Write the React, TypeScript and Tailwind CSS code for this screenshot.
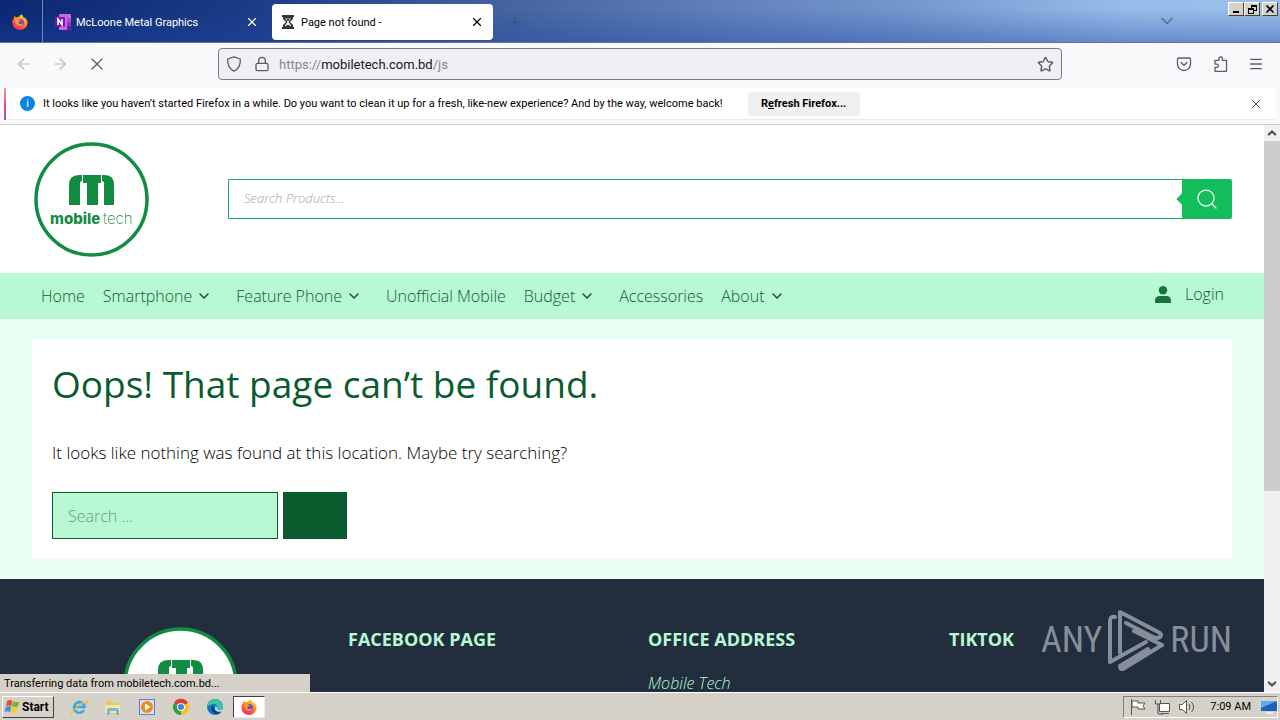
import { ChevronDown, ChevronUp, Search, X, ArrowLeft, ArrowRight, Star, Lock, Menu, Plus } from "lucide-react";

const navItems = [
    { label: "Home", menu: false },
    { label: "Smartphone", menu: true },
    { label: "Feature Phone", menu: true },
    { label: "Unofficial Mobile", menu: false },
    { label: "Budget", menu: true },
    { label: "Accessories", menu: false },
    { label: "About", menu: true }
];

function FirefoxIcon({ className }: { className?: string }) {
    return (
        <svg viewBox="0 0 16 16" className={className} aria-hidden="true">
            <defs>
                <linearGradient id="fx-body" x1="0.8" y1="0" x2="0.2" y2="1">
                    <stop offset="0" stopColor="#ffe226" />
                    <stop offset="0.45" stopColor="#ff8a16" />
                    <stop offset="1" stopColor="#f5156c" />
                </linearGradient>
            </defs>
            <path fill="url(#fx-body)" d="M9.4.3c1.2 1 1.8 2 2 3.1.9-.1 1.2.1 1.7.7 1 .9 2.5 2.7 2.5 5A7.6 7.6 0 0 1 8 16 7.6 7.6 0 0 1 .4 8.7c0-2.1.7-3.6 1.6-4.7L2.4 1.8l1.7 1.7C5 3 6 3 6.8 3.1 7.4 2 8.2 1 9.4.3Z" />
            <circle cx="8.2" cy="8.8" r="3.7" fill="#7542e5" />
            <path fill="#ff9a1f" d="M3.6 4.7c1.4-.5 2.8 0 3.6 1l2 .3c-.4 1-1.6 1.2-2.4 1.6-.6.5-.5 1.7.4 2.3 1.5.8 2.5-.6 4-.2-.7 1.7-2.2 2.6-3.9 2.3-2.7-.5-4.7-3.5-3.7-7.3Z" />
        </svg>
    );
}

function OneNoteIcon() {
    return (
        <svg viewBox="0 0 16 16" className="size-4" aria-hidden="true">
            <rect x="4" width="12" height="16" rx="1" fill="#ca64ea" />
            <path fill="#ae4bd5" d="M12 4h4v4h-4z" />
            <path fill="#9332bf" d="M12 8h4v4h-4z" />
            <path fill="#7719aa" d="M12 12h4v3l-1 1h-3z" />
            <rect y="3" width="10" height="10" rx="1" fill="#7719aa" />
            <path d="M3 11V5l4 6V5" fill="none" stroke="#fff" strokeWidth="1.5" />
        </svg>
    );
}

function HourglassIcon() {
    return (
        <svg viewBox="0 0 14 14" className="size-3.5" aria-hidden="true" fill="#333">
            <path d="M1 0h12v2H1zM1 12h12v2H1z" />
            <path fillRule="evenodd" d="M2 2h10v2L9 7l3 3v2H2v-2l3-3-3-3Zm2 1.5L6.5 7 4 10.5v1l3-2 3 2v-1L7.5 7 10 3.5Z" />
            <path d="M5 4h4L7 6.5z" />
        </svg>
    );
}

function MobileTechLogo({ className }: { className?: string }) {
    return (
        <svg viewBox="0 0 115 115" className={className} role="img" aria-label="mobile tech">
            <circle cx="57.5" cy="57.5" r="55.5" fill="#fff" stroke="#138c43" strokeWidth="3.5" />
            <g fill="#138c43">
                <path d="M35 63V43q0-10 10-10h3v6q-2 0-2 3v21Z" />
                <path d="M49 33h18v8h-3v22H53V41h-4Z" />
                <path d="M68 33h3q9 0 9 10v20H70V42q0-3-2-3Z" />
                <text x="16" y="82" className="font-[Inter,sans-serif] text-[15px] font-extrabold">mobile</text>
                <text x="69" y="82" className="font-[Inter,sans-serif] text-[15px] font-extralight">tech</text>
            </g>
        </svg>
    );
}

function TabBar() {
    return (
        <div className="h-[43px] shrink-0 flex items-stretch bg-[linear-gradient(to_bottom,transparent_20%,#1d46a366),linear-gradient(to_right,#0b2870,#1c3c85_20%,#45659f_40%,#6483bd_58%,#7396cb_70%,#98bcea_88%,#9bc0ea)] border-b border-slate-500 text-[11px]">
            <button aria-label="Firefox View" className="w-[43px] pt-px pr-0.5 flex items-center justify-center border-r border-[#7189b9]">
                <FirefoxIcon className="size-4" />
            </button>
            <div className="w-[229px] pt-0.5 flex items-center pl-3 pr-[13px] text-white">
                <OneNoteIcon />
                <span className="ml-[5px] mt-0.5 flex-1">McLoone Metal Graphics</span>
                <button aria-label="Close tab"><X className="size-3.5" strokeWidth={2} /></button>
            </div>
            <div className="w-[221px] mt-1 mb-0.5 flex items-center pl-[9px] pr-[9px] bg-white rounded-sm text-black">
                <HourglassIcon />
                <span className="ml-1.5 mt-0.5 flex-1">Page not found -</span>
                <button aria-label="Close tab"><X className="size-3.5" strokeWidth={2} /></button>
            </div>
            <button aria-label="New tab" className="ml-[15px] pt-0.5 text-[#3c5076]"><Plus className="size-3.5" strokeWidth={2} /></button>
            <div className="flex-1" />
            <button aria-label="List all tabs" className="mr-[51px] text-[#53709f]"><ChevronDown className="size-5" strokeWidth={2} /></button>
            <div className="flex items-start pt-0.5 pr-0.5 text-black">
                <button aria-label="Minimize" className="w-4 h-3.5 bg-[#d6d2ca] border border-t-white border-l-white border-b-[#404040] border-r-[#404040] flex items-end justify-center pb-0.5">
                    <span className="w-1.5 h-0.5 bg-black" />
                </button>
                <button aria-label="Restore" className="w-4 h-3.5 bg-[#d6d2ca] border border-t-white border-l-white border-b-[#404040] border-r-[#404040] flex items-center justify-center">
                    <svg viewBox="0 0 9 9" className="size-[9px]" fill="none" stroke="#000" shapeRendering="crispEdges"><path d="M3.5 3V1.5h5v4H6M3 .5h6M.5 4.5h5v4h-5zM0 3.5h6" /></svg>
                </button>
                <button aria-label="Close" className="w-4 h-3.5 ml-0.5 bg-[#d6d2ca] border border-t-white border-l-white border-b-[#404040] border-r-[#404040] flex items-center justify-center">
                    <X className="size-3" strokeWidth={3.5} />
                </button>
            </div>
        </div>
    );
}

function Toolbar() {
    return (
        <div className="h-[45px] shrink-0 flex items-center pb-[3px] bg-[#f9f9fb] text-[#5b5b66]">
            <div className="w-[218px] shrink-0 flex items-center gap-[18px] pl-[15px]">
                <button aria-label="Back" className="text-[#b9b9be]"><ArrowLeft className="size-[18px]" strokeWidth={1.5} /></button>
                <button aria-label="Forward" className="text-[#b9b9be]"><ArrowRight className="size-[18px]" strokeWidth={1.5} /></button>
                <button aria-label="Stop"><X className="size-5" strokeWidth={1.5} /></button>
            </div>
            <div className="h-8 flex-1 flex items-center px-[7px] bg-[#f0f0f4] border border-[#7a7a83] rounded text-[13px]">
                <svg viewBox="0 0 16 16" className="size-4" fill="none" stroke="currentColor" strokeWidth="1.3" aria-hidden="true">
                    <path d="M8 .9 14.3 3c.4 5.5-1.3 9.7-6.3 12.2C3 12.7 1.3 8.5 1.7 3Z" strokeLinejoin="round" />
                </svg>
                <Lock className="size-4 ml-3" strokeWidth={2} />
                <span className="ml-[9px] mt-0.5 flex-1 text-[#85858d]">https://<span className="text-[#15141a]">mobiletech.com.bd</span>/js</span>
                <button aria-label="Bookmark this page"><Star className="size-[17px]" strokeWidth={2} /></button>
            </div>
            <div className="w-[218px] shrink-0 flex items-center justify-end gap-5 pr-4">
                <button aria-label="Save to Pocket">
                    <svg viewBox="0 0 16 16" className="size-4" fill="none" stroke="currentColor" strokeWidth="1.3" strokeLinecap="round">
                        <path d="M3 2h10q1.5 0 1.5 1.5V8a6.5 6.5 0 0 1-13 0V3.5Q1.5 2 3 2Z" />
                        <path d="m5 6.5 3 2.8 3-2.8" />
                    </svg>
                </button>
                <button aria-label="Extensions">
                    <svg viewBox="0 0 16 16" className="size-4" fill="none" stroke="currentColor" strokeWidth="1.3" strokeLinejoin="round">
                        <path d="M3 5.5V4.3h4V2.7a1.7 1.7 0 0 1 3.4 0v1.6h4.1v11H3v-4h1.8a1.6 1.6 0 0 0 0-3.2H3Z" />
                    </svg>
                </button>
                <button aria-label="Open menu"><Menu className="size-4" strokeWidth={2} /></button>
            </div>
        </div>
    );
}

function NotificationBar() {
    return (
        <div className="h-[37px] shrink-0 bg-[#f9f9fb] border-b border-[#cccccf] px-1 pb-1">
            <div className="h-8 flex items-center bg-white rounded border-b border-[#ebebee] text-[11px] text-black">
                <span className="w-0.5 h-8 bg-linear-to-b from-[#ff9a6b] via-[#e2489e] to-[#9059c8]" />
                <span className="size-[15px] ml-3.5 rounded-full bg-[#0a84e0] text-white text-[11px] leading-none flex items-center justify-center">i</span>
                <span className="ml-2 mt-0.5">It looks like you haven’t started Firefox in a while. Do you want to clean it up for a fresh, like-new experience? And by the way, welcome back!</span>
                <button className="w-28 h-6 pt-0.5 ml-[25px] rounded bg-[#f0f0f0] font-bold">R<u>e</u>fresh Firefox...</button>
                <button aria-label="Dismiss" className="ml-auto mr-3 text-[#5b5b66]"><X className="size-4" strokeWidth={1.5} /></button>
            </div>
        </div>
    );
}

function SiteHeader() {
    return (
        <header className="h-[148px] shrink-0 bg-white flex items-center pl-[34px] pr-8">
            <a href="#home"><MobileTechLogo className="size-[115px]" /></a>
            <form className="flex-1 ml-[79px] h-10 flex">
                <input
                    type="search"
                    aria-label="Search products"
                    placeholder="Search Products..."
                    className="flex-1 min-w-0 px-[15px] border border-r-0 border-[#21a366] rounded-l-xs text-[13px] italic font-light placeholder:text-[#a5a5a5] outline-none"
                />
                <button type="button" aria-label="Search" className="relative w-[50px] bg-[#12bd5b] rounded-r-xs flex items-center justify-center text-white">
                    <span className="absolute -left-1 top-[16px] size-2 rotate-45 bg-[#12bd5b]" />
                    <Search className="size-6" strokeWidth={1.25} />
                </button>
            </form>
        </header>
    );
}

function SiteNav() {
    return (
        <nav className="h-[46px] shrink-0 bg-[#b8f9d4] flex items-center pl-[41px] pr-10 text-base font-light text-[#0a5c2f]">
            {navItems.map((item) => (
                <a key={item.label} href={`#${item.label}`} className={item.menu ? "flex items-center mr-6" : "mr-[18px]"}>
                    {item.label}
                    {item.menu && <ChevronDown className="size-4 ml-1" strokeWidth={2.25} />}
                </a>
            ))}
            <a href="#login" className="ml-auto flex items-center pb-1">
                <svg viewBox="0 0 16 17" className="w-4 h-[17px] mr-3.5" fill="#17733f" aria-hidden="true">
                    <circle cx="8" cy="4.3" r="4.2" />
                    <path d="M0 17v-2q0-5 5-5h6q5 0 5 5v2Z" />
                </svg>
                Login
            </a>
        </nav>
    );
}

function NotFound() {
    return (
        <main className="shrink-0 bg-[#e8fff3] pl-8 pr-8 py-5">
            <section className="h-[220px] bg-white px-5 pt-5">
                <h1 className="text-[37px] leading-[50px] text-[#0a5c2f]">Oops! That page can’t be found.</h1>
                <p className="mt-[30px] text-[17px] leading-7 font-light text-black">It looks like nothing was found at this location. Maybe try searching?</p>
                <form className="mt-[25px] flex gap-[5px]">
                    <input
                        type="search"
                        aria-label="Search"
                        placeholder="Search ..."
                        className="w-[226px] h-[47px] px-[15px] bg-[#b8f9d4] border border-[#0a5c2f] text-base font-light placeholder:text-[#609c7b] outline-none"
                    />
                    <button type="button" aria-label="Submit search" className="w-16 h-[47px] bg-[#0a5c2f]" />
                </form>
            </section>
        </main>
    );
}

function AnyRunMark() {
    return (
        <div className="absolute right-8 bottom-5 h-16 flex items-center gap-1.5 text-[#858e9a] font-['Roboto_Condensed',Roboto,sans-serif] text-4xl leading-none">
            <span>ANY</span>
            <svg viewBox="0 0 56 62" className="w-14 h-[62px]" fill="none" stroke="currentColor" strokeWidth="4" strokeLinejoin="round" strokeLinecap="round" aria-hidden="true">
                <path d="M7 8Q2 7 2 12v41l36-20" />
                <path d="M12 44V3l40 21q2 2 0 4-3 2-7 0L18 14" />
                <path d="M26 22l28 14-39 24q-3 1-3-3l28-17" />
            </svg>
            <span>RUN</span>
        </div>
    );
}

function SiteFooter() {
    return (
        <footer className="flex-1 min-h-0 overflow-hidden bg-[#222e3e] text-[#b8f9d4]">
            <div className="grid grid-cols-4 pl-8 pr-8 pt-12">
                <div className="pl-[91px]">
                    <MobileTechLogo className="size-[115px]" />
                </div>
                <h2 className="pl-4 text-lg leading-6 font-bold">FACEBOOK PAGE</h2>
                <div className="pl-4">
                    <h2 className="text-lg leading-6 font-bold">OFFICE ADDRESS</h2>
                    <p className="mt-5 text-base leading-6 italic font-light">Mobile Tech</p>
                </div>
                <h2 className="pl-[17px] text-lg leading-6 font-bold">TIKTOK</h2>
            </div>
        </footer>
    );
}

function ScrollBar() {
    return (
        <div className="w-4 shrink-0 bg-[#f0f0f0] flex flex-col items-center text-[#505050]">
            <ChevronUp className="size-4 shrink-0" strokeWidth={4} viewBox="-3 -3 30 30" />
            <div className="w-full h-[350px] bg-[#cdcdcd]" />
            <ChevronDown className="size-4 mt-auto shrink-0" strokeWidth={4} viewBox="-3 -3 30 30" />
        </div>
    );
}

function Taskbar() {
    return (
        <div className="h-7 shrink-0 flex items-center pl-0.5 pr-0.5 bg-[#d6d1c8] border-t border-white text-[11px] text-black">
            <button className="w-[52px] h-[22px] flex items-center gap-0.5 pl-px border border-t-white border-l-white border-b-[#404040] border-r-[#404040] font-bold text-xs">
                <svg viewBox="0 0 16 16" className="size-4 shrink-0" aria-hidden="true">
                    <path fill="#e8552c" d="M3 2q3-2 5.5 0L7.3 7.2q-2.5-1.5-5.3 0Z" />
                    <path fill="#76b82a" d="M9.3 2.3q3 1.5 6 .2L14 7.5q-3 1.2-6 0Z" />
                    <path fill="#3a8fe0" d="M1.8 8q3-1.5 5.3 0L6 13q-2.5-1.5-5.5 0Z" />
                    <path fill="#ffc627" d="M7.9 8.3q3 1.4 6 .2l-1.3 5q-3 1.3-5.9-.2Z" />
                </svg>
                Start
            </button>
            <button aria-label="Internet Explorer" className="ml-4">
                <svg viewBox="0 0 18 18" className="size-[18px]" fill="none">
                    <path d="M14 12a5.3 5.3 0 1 1 .6-3H5" stroke="#38a6e4" strokeWidth="2.6" />
                    <path d="M2 15C-1 18 7 6 17 3c1 0 .5 2-.8 4" stroke="#efbd38" strokeWidth="1.2" />
                </svg>
            </button>
            <button aria-label="File Explorer" className="ml-4">
                <svg viewBox="0 0 18 18" className="size-[18px]">
                    <path fill="#e9c660" d="M2 3h6l1 2h6v11H2Z" />
                    <path fill="#f9e7a0" d="M1 7h15v8H1Z" />
                    <path fill="#77bbe0" d="M3 12q0-2 2-2h8q2 0 2 2v5h-3v-4H6v4H3Z" />
                </svg>
            </button>
            <button aria-label="Media Player" className="ml-4">
                <svg viewBox="0 0 18 18" className="size-[18px]">
                    <rect x="1.5" y="1.5" width="15" height="15" fill="#cfe3f4" stroke="#5587c2" />
                    <circle cx="9" cy="9" r="6" fill="#f08a1c" />
                    <path fill="#fff" d="m7 5.5 5.5 3.5L7 12.5Z" />
                </svg>
            </button>
            <button aria-label="Chrome" className="ml-4">
                <svg viewBox="0 0 18 18" className="size-[18px]">
                    <path fill="#e33b2e" d="M9 9 2 5a8 8 0 0 1 14 0Z" />
                    <path fill="#fbc116" d="M9 9h0l7-4a8 8 0 0 1-7 12Z" />
                    <path fill="#2ba24c" d="M9 9v8A8 8 0 0 1 2 5Z" />
                    <circle cx="9" cy="9" r="4" fill="#fff" />
                    <circle cx="9" cy="9" r="3" fill="#3f7fea" />
                </svg>
            </button>
            <button aria-label="Edge" className="ml-4">
                <svg viewBox="0 0 18 18" className="size-[18px]">
                    <circle cx="9" cy="9" r="8" fill="#1577c9" />
                    <path fill="#39c5a5" d="M1 9a8 8 0 0 1 16 0c0 3-5 4-6 2 1-3-1-5-3-5-4 0-6 2-7 3Z" />
                    <path fill="#123f83" d="M6 8c-2 3 0 7 4 8 2 .3 4-.7 5-2-4 1-7-1-7-5Z" />
                    <path fill="#d6d1c8" d="M9 8.5q2.5-.5 2 2 1 2.5 6 .5l-1 2.5q-5 1-7-2Z" />
                </svg>
            </button>
            <button aria-label="Firefox" className="w-8 h-[22px] ml-[9px] bg-white border border-t-[#404040] border-l-[#404040] border-b-[#eee] border-r-[#eee] flex items-center justify-center">
                <FirefoxIcon className="size-4" />
            </button>
            <div className="h-[22px] ml-auto pl-1.5 flex items-center border border-t-[#808080] border-l-[#808080] border-b-white border-r-white">
                <svg viewBox="0 0 66 18" className="w-[66px] h-[18px]" fill="#fff" stroke="#58544e" aria-hidden="true">
                    <path d="M1.5 1v16M2 3h6v2h7l-2 3 2 3H8V9H2Z" />
                    <path d="M29.5 5.5h10v8h-10zM31 15.5h8" />
                    <path d="M25.5 2v4h5V2M28 6v10h5" fill="none" />
                    <path d="M49.5 6.5h3l4-4v13l-4-4h-3Z" />
                    <path d="M59 6q2 3 0 6M61.5 4q4 5 0 10" fill="none" />
                </svg>
                <span className="ml-3.5 mt-0.5">7:09 AM</span>
                <svg viewBox="0 0 16 14" className="w-4 h-3.5 ml-2.5" aria-hidden="true">
                    <path fill="#1e62b8" d="M0 1h16v10H0Z" />
                    <path fill="#5fa8ec" d="M0 1h16L0 8Z" />
                    <path fill="#e9eef5" d="M5 12h7v2H5Z" />
                </svg>
            </div>
        </div>
    );
}

export default function App() {
    return (
        <div className="h-screen flex flex-col overflow-hidden font-[Roboto,sans-serif]">
            <TabBar />
            <Toolbar />
            <NotificationBar />
            <div className="flex-1 min-h-0 flex">
                <div className="relative flex-1 min-w-0 flex flex-col overflow-hidden font-['Open_Sans','Noto_Sans',sans-serif]">
                    <SiteHeader />
                    <SiteNav />
                    <NotFound />
                    <SiteFooter />
                    <AnyRunMark />
                    {/* Page loading status */}
                    <div className="absolute left-0 bottom-0 w-[310px] h-[18px] pl-1 pt-0.5 bg-[#d6d1c8] font-[Roboto,sans-serif] text-[11px] leading-4 text-black">
                        Transferring data from mobiletech.com.bd...
                    </div>
                </div>
                <ScrollBar />
            </div>
            <Taskbar />
        </div>
    );
}
